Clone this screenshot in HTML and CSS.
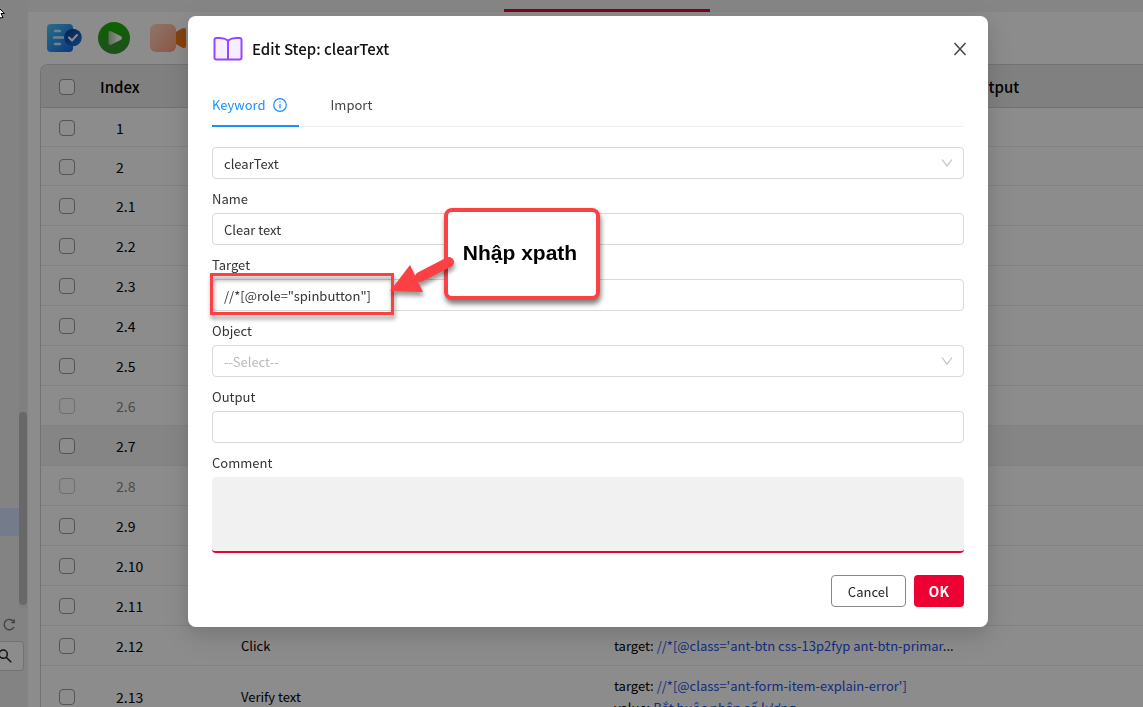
FILE: index.html
```html
<!DOCTYPE html>
<html lang="vi">
<head>
<meta charset="utf-8">
<meta name="viewport" content="width=device-width, initial-scale=1">
<title>Edit Step: clearText</title>
<link rel="stylesheet" href="styles.css">
</head>
<body>
<div class="app">
  <aside class="sidebar">
    <div class="tree">
      <div class="tree-list"><div class="tree-selected"></div></div>
      <div class="track"><div class="thumb"></div></div>
    </div>
    <button class="refresh" aria-label="Refresh">
      <svg width="14" height="14" viewBox="0 0 14 14" fill="none" stroke="#777" stroke-width="1.4"><path d="M11.7 3.7A5.2 5.2 0 1 0 12 9"/><path d="M12.2 1.6v2.9H9.4"/></svg>
    </button>
    <button class="search" aria-label="Search">
      <svg width="14" height="14" viewBox="0 0 14 14" fill="none" stroke="#222" stroke-width="1.5"><circle cx="5.2" cy="5.2" r="4.1"/><path d="M8.2 8.2l5 5"/></svg>
    </button>
  </aside>
  <main class="main">
    <div class="topbar"><div class="active-tab"></div></div>
    <div class="toolbar">
      <button aria-label="Save steps">
        <svg width="36" height="32" viewBox="0 0 36 32">
          <defs>
            <linearGradient id="doc" x1="0" y1="0" x2="1" y2="1"><stop offset="0" stop-color="#4cc8fb"/><stop offset="1" stop-color="#1266e8"/></linearGradient>
            <linearGradient id="tick" x1="0" y1="0" x2="1" y2="1"><stop offset="0" stop-color="#0a3c8c"/><stop offset="1" stop-color="#1a7bf0"/></linearGradient>
          </defs>
          <rect x="1" y="2" width="26" height="28" rx="4" fill="url(#doc)"/>
          <path d="M9 9h5M8 15.500h9M9 22h5" stroke="#c8ecff" stroke-width="2.400" stroke-linecap="round"/>
          <circle cx="27" cy="15.500" r="8.800" fill="url(#tick)"/>
          <path d="M23 15.500l3 3 5-5.500" fill="none" stroke="#fff" stroke-width="2" stroke-linecap="round" stroke-linejoin="round"/>
        </svg>
      </button>
      <button aria-label="Run">
        <svg width="32" height="32" viewBox="0 0 32 32">
          <defs>
            <linearGradient id="run" x1="0" y1="0" x2="0" y2="1"><stop offset="0" stop-color="#15b600"/><stop offset="1" stop-color="#3e8f38"/></linearGradient>
            <linearGradient id="tri" x1="0" y1="0" x2="1" y2="0"><stop offset="0" stop-color="#9fc99b"/><stop offset=".7" stop-color="#fff"/></linearGradient>
          </defs>
          <circle cx="16" cy="16" r="16" fill="url(#run)"/>
          <path d="M10.500 11q0-2.800 2.500-1.700l10 5q2 1.700 0 3.400l-10 5q-2.500 1.100-2.500-1.700z" fill="url(#tri)"/>
        </svg>
      </button>
      <button aria-label="Record">
        <svg width="38" height="32" viewBox="0 0 38 32">
          <defs>
            <linearGradient id="cam" x1="0" y1="0" x2="1" y2="1"><stop offset="0" stop-color="#ffd6c4"/><stop offset="1" stop-color="#ffa07c"/></linearGradient>
            <linearGradient id="lens" x1="0" y1="0" x2="0" y2="1"><stop offset="0" stop-color="#e67a30"/><stop offset="1" stop-color="#ff7a00"/></linearGradient>
          </defs>
          <path d="M24 11l8-4.500q4-1.500 4 1.500v16q0 3-4 1.500l-8-4.500z" fill="url(#lens)"/>
          <rect x="0" y="2" width="26" height="28" rx="6" fill="url(#cam)"/>
        </svg>
      </button>
    </div>
    <div class="table-wrap">
      <table class="steps">
        <colgroup><col class="c-check"><col class="c-index"><col class="c-name"><col class="c-value"><col></colgroup>
        <thead><tr><th><input type="checkbox" aria-label="Select all"></th><th>Index</th><th></th><th></th><th>Output</th></tr></thead>
        <tbody>
          <tr class="group"><td><input type="checkbox" aria-label="Step 1"></td><td>1</td><td></td><td></td><td></td></tr>
          <tr class="group"><td><input type="checkbox" aria-label="Step 2"></td><td>2</td><td></td><td></td><td></td></tr>
          <tr><td><input type="checkbox" aria-label="Step 2.1"></td><td>2.1</td><td></td><td></td><td></td></tr>
          <tr><td><input type="checkbox" aria-label="Step 2.2"></td><td>2.2</td><td></td><td></td><td></td></tr>
          <tr><td><input type="checkbox" aria-label="Step 2.3"></td><td>2.3</td><td></td><td></td><td></td></tr>
          <tr><td><input type="checkbox" aria-label="Step 2.4"></td><td>2.4</td><td></td><td></td><td></td></tr>
          <tr><td><input type="checkbox" aria-label="Step 2.5"></td><td>2.5</td><td></td><td></td><td></td></tr>
          <tr class="off"><td><input type="checkbox" aria-label="Step 2.6"></td><td>2.6</td><td></td><td></td><td></td></tr>
          <tr class="current"><td><input type="checkbox" aria-label="Step 2.7"></td><td>2.7</td><td></td><td></td><td></td></tr>
          <tr class="off"><td><input type="checkbox" aria-label="Step 2.8"></td><td>2.8</td><td></td><td></td><td></td></tr>
          <tr><td><input type="checkbox" aria-label="Step 2.9"></td><td>2.9</td><td></td><td></td><td></td></tr>
          <tr><td><input type="checkbox" aria-label="Step 2.10"></td><td>2.10</td><td></td><td></td><td></td></tr>
          <tr><td><input type="checkbox" aria-label="Step 2.11"></td><td>2.11</td><td></td><td></td><td></td></tr>
          <tr><td><input type="checkbox" aria-label="Step 2.12"></td><td>2.12</td><td>Click</td><td><div>target: <span class="val">//*[@class='ant-btn css-13p2fyp ant-btn-primar</span>...</div></td><td></td></tr>
          <tr class="tall"><td><input type="checkbox" aria-label="Step 2.13"></td><td>2.13</td><td>Verify text</td><td><div>target: <span class="val">//*[@class='ant-form-item-explain-error']</span></div><div>value: <span class="val">Bắt buộc nhập số lượng</span></div></td><td></td></tr>
        </tbody>
      </table>
    </div>
  </main>
</div>

<div class="overlay">
  <div class="modal" role="dialog" aria-labelledby="dlg-title">
    <header class="modal-head">
      <svg width="32" height="26" viewBox="0 0 32 26" fill="#f6efff" stroke="#9747ff" stroke-width="2" stroke-linejoin="round"><path d="M16 4.500Q12.500 2 8 2H4.500Q2.500 2 2.500 4V21.500Q2.500 23.500 4.500 23.500H27.500Q29.500 23.500 29.500 21.500V4Q29.500 2 27.500 2H24Q19.500 2 16 4.500z"/><path d="M16 4.500V23.500"/></svg>
      <h1 id="dlg-title">Edit Step: clearText</h1>
      <button class="close" aria-label="Close"><svg width="14" height="14" viewBox="0 0 14 14" fill="none" stroke="#444" stroke-width="1.500"><path d="M1.500 1l11 12M12.500 1l-11 12"/></svg></button>
    </header>
    <div class="tabs" role="tablist">
      <button class="tab on" role="tab" aria-selected="true">Keyword
        <svg width="14" height="14" viewBox="0 0 14 14" fill="none" stroke="#1890ff"><circle cx="7" cy="7" r="6.300" stroke-width="1.200"/><path d="M7 6v4.500M7 3.500v1.200" stroke-width="1.200"/></svg>
      </button>
      <button class="tab" role="tab" aria-selected="false">Import</button>
    </div>
    <form class="form">
      <div class="pick">
        <select aria-label="Keyword"><option>clearText</option></select>
        <svg class="chev" width="12" height="8" viewBox="0 0 12 8" fill="none" stroke="#bfbfbf" stroke-width="1.200"><path d="M1 .5l5 6.500 5-6.500"/></svg>
      </div>
      <label for="name">Name</label>
      <input id="name" type="text" value="Clear text">
      <label for="target">Target</label>
      <div class="target">
        <input id="target" type="text" value='//*[@role="spinbutton"]'>
        <div class="mark"></div>
        <div class="callout">Nhập xpath</div>
        <svg class="arrow" width="70" height="46" viewBox="0 0 70 46"><path d="M60 8L31 23" stroke="#fb4143" stroke-width="10" stroke-linecap="round"/><path d="M1 37L21 11L34 38z" fill="#fb4143"/></svg>
      </div>
      <label for="object">Object</label>
      <div class="pick">
        <select id="object" class="empty"><option>--Select--</option></select>
        <svg class="chev" width="12" height="8" viewBox="0 0 12 8" fill="none" stroke="#bfbfbf" stroke-width="1.200"><path d="M1 .5l5 6.500 5-6.500"/></svg>
      </div>
      <label for="output">Output</label>
      <input id="output" type="text">
      <label for="comment">Comment</label>
      <textarea id="comment"></textarea>
      <div class="actions">
        <button type="button" class="btn">Cancel</button>
        <button type="button" class="btn primary">OK</button>
      </div>
    </form>
  </div>
</div>
<svg class="cursor" width="6" height="14" viewBox="0 0 6 14"><path d="M-5 -1L4.500 8.500H1L3 12.500L0 13z" fill="#fff" stroke="#000"/></svg>
</body>
</html>
```
FILE: styles.css
```css
* { box-sizing: border-box; }
body {
  margin: 0;
  height: 100vh;
  overflow: hidden;
  font: 13px/22px "Noto Sans CJK SC", "Noto Sans", sans-serif;
  color: #000;
}
button { border: 0; padding: 0; background: none; font: inherit; color: inherit; }

.app { display: flex; height: 100vh; background: #fff; }

.sidebar {
  flex: none;
  width: 28px;
  padding-top: 40px;
  background: #efefef;
  display: flex;
  flex-direction: column;
  align-items: flex-start;
}
.tree { display: flex; flex: none; width: 27px; height: 568px; }
.tree-list { flex: 1; padding-top: 468px; }
.tree-selected { height: 28px; background: #d4e2ff; }
.track { width: 8px; background: #e8e8e8; padding-top: 372px; }
.thumb { height: 193px; border-radius: 4px; background: #bdbdbd; }
.refresh { height: 14px; margin: 10px 0 9px 2px; display: flex; }
.search {
  width: 24px;
  height: 30px;
  display: flex;
  align-items: center;
  background: #fff;
  border: 1px solid #d0d0d0;
  border-left: 0;
  border-radius: 0 4px 4px 0;
}
.search svg { margin-left: -2px; }

.main { flex: 1; min-width: 0; display: flex; flex-direction: column; }
.topbar { flex: none; height: 12px; background: #f2f2f2; padding: 9px 0 0 476px; }
.active-tab { width: 206px; height: 3px; background: #ee0033; }
.toolbar { flex: none; height: 52px; padding-left: 18px; display: flex; align-items: center; gap: 16px; }
.toolbar button { display: flex; }
.toolbar button:last-child { margin-left: 4px; }

.table-wrap { flex: 1; min-height: 0; overflow: hidden; margin-left: 12px; border: solid #d0d0d0; border-width: 1px 0 0 1px; border-radius: 8px 0 0 0; }
.steps { width: 100%; table-layout: fixed; border-collapse: separate; border-spacing: 0; }
.c-check { width: 52px; }
.c-index { width: 140px; }
.c-name { width: 373px; }
.c-value { width: 355px; }
.steps th { height: 43px; padding: 1px 7px 0; background: #e9e9e9; border-bottom: 1px solid #d0d0d0; text-align: left; font-size: 15px; font-weight: 500; }
.steps td { height: 40px; padding: 0 0 0 8px; border-bottom: 1px solid #ececec; white-space: nowrap; }
.steps th:first-child { padding: 1px 0 0 18px; }
.steps td:first-child { padding-left: 18px; }
.steps td:nth-child(2) { padding-left: 23px; font-size: 14px; }
.steps .group td { height: 39px; padding-top: 1px; }
.steps .tall td { height: 62px; }
.steps .off td { color: #888; }
.steps .off input { opacity: .5; }
.steps .current td { background: #f3f3f3; }
.steps input { appearance: none; display: block; width: 16px; height: 16px; margin: 0; border: 1px solid #999; border-radius: 4px; background: #fff; }
.val { color: #1f50e6; }

.overlay {
  position: fixed;
  inset: 0;
  padding: 16px 0 0 33px;
  background: rgba(0, 0, 0, .45);
  display: flex;
  justify-content: center;
  align-items: flex-start;
}
.modal {
  width: 100%;
  max-width: 800px;
  padding: 20px 24px;
  background: #fff;
  border-radius: 8px;
  box-shadow: 0 6px 16px rgba(0, 0, 0, .1), 0 9px 28px 8px rgba(0, 0, 0, .07);
}
.modal-head { display: flex; align-items: center; gap: 8px; height: 26px; }
.modal-head h1 { margin: 0; font-size: 15px; font-weight: 500; color: #111; }
.close { display: flex; width: 24px; height: 24px; margin: 0 -8px 0 auto; align-items: center; justify-content: center; }
.tabs { display: flex; gap: 32px; margin-top: 22px; border-bottom: 1px solid #f0f0f0; }
.tab { display: flex; align-items: center; gap: 7px; height: 43px; margin-bottom: -1px; border-bottom: 2px solid transparent; color: #444; }
.tab.on { padding-right: 12px; color: #1890ff; border-color: #1890ff; }

.form { display: flex; flex-direction: column; padding-top: 20px; }
.form label { margin: 9px 0 3px; color: #333; }
.form input, .form select, .form textarea {
  display: block;
  width: 100%;
  height: 32px;
  padding: 1px 11px 0;
  border: 1px solid #d9d9d9;
  border-radius: 4px;
  background: #fff;
  font: inherit;
  color: #333;
  outline: 0;
}
.form select { appearance: none; }
.form select.empty { color: #bbb; }
.form textarea { height: 76px; border: 0; border-bottom: 2px solid #ee0033; background: #f1f1f1; resize: none; }
.pick { position: relative; }
.chev { position: absolute; right: 11px; top: 12px; }

.target { position: relative; }
.mark {
  position: absolute; left: -2px; top: -6px; width: 184px; height: 42px;
  border: 3px solid #fb4143;
  filter: drop-shadow(1px 4px 2px rgba(0, 0, 0, .4));
}
.callout {
  position: absolute; left: 232px; top: -71px; width: 156px; height: 92px;
  padding: 0 4px 2px 0;
  display: flex; align-items: center; justify-content: center;
  border: 4px solid #fb4143; border-radius: 8px; background: #fff;
  box-shadow: 1px 4px 5px rgba(0, 0, 0, .5);
  font: bold 21px/24px "Liberation Sans", Arial, sans-serif; color: #000;
}
.arrow { position: absolute; left: 177px; top: -25px; filter: drop-shadow(1px 4px 2px rgba(0, 0, 0, .4)); }

.actions { display: flex; justify-content: flex-end; gap: 8px; margin-top: 22px; }
.btn { height: 32px; padding: 1px 16px 0; border: 1px solid #888; border-radius: 4px; color: #222; background: #fff; }
.btn.primary { padding: 0 15px; border: 0; background: #ee0033; color: #fff; font-size: 14px; font-weight: 700; }
.cursor { position: fixed; left: 0; top: 5px; }
```
